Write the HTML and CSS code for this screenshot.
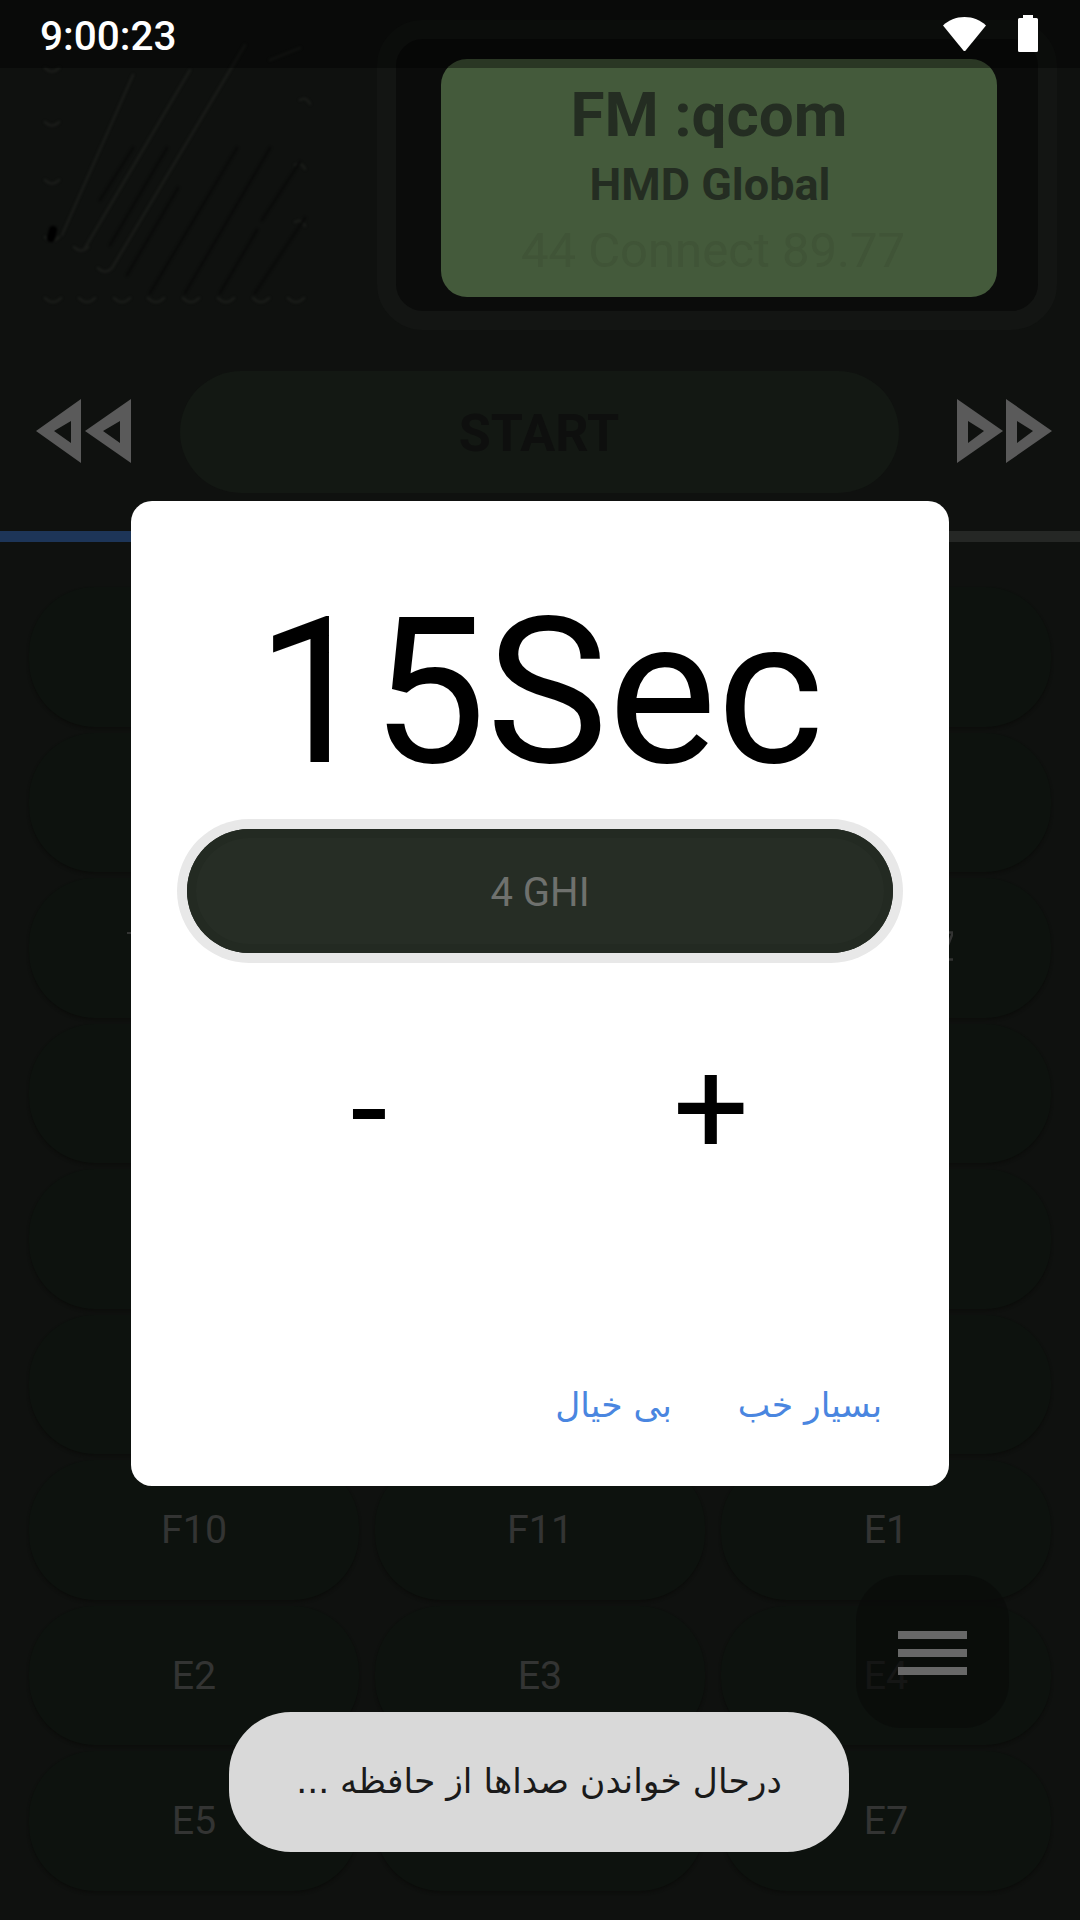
FILE: index.html
```html
<!DOCTYPE html>
<html lang="en">
<head>
<meta charset="utf-8">
<title>Sound pad</title>
<link rel="stylesheet" href="styles.css">
</head>
<body>
<div class="screen">
  <div class="status">
    <span class="clock">9:00:23</span>
    <div class="status-icons">
      <svg class="wifi" viewBox="0 0 43 34"><path d="M0 8.500C5.500 3.200 13 0 21.500 0S37.500 3.200 43 8.500L22.200 34h-1.400z" fill="#fff"/></svg>
      <svg class="battery" viewBox="0 0 20 37"><path d="M5 0h10v3h3.500A1.500 1.500 0 0 1 20 4.500V35.500A1.500 1.500 0 0 1 18.500 37H1.500A1.500 1.500 0 0 1 0 35.500V4.500A1.500 1.500 0 0 1 1.500 3H5z" fill="#fff"/></svg>
    </div>
  </div>

  <div class="top">
    <svg class="grille" viewBox="40 35 275 280">
      <g fill="none" stroke="#1a1c19" stroke-width="2.500" stroke-linecap="round">
        <path d="M45 298q8 8 16 0M79 298q8 8 16 0M114 298q8 8 16 0M148 298q8 8 16 0M183 298q8 8 16 0M218 298q8 8 16 0M253 298q8 8 16 0M288 298q8 8 16 0"/>
        <path d="M45 237q7 7 14 0M74 247q7 7 14 0M98 268q7 7 14 0M45 180q7 7 14 0M45 122q7 7 14 0M45 68q7 7 14 0"/>
        <path d="M62 235L133 75M85 248L190 70M112 268L245 45M270 60L300 48M300 100q6 -4 10 4M295 165q6 -4 10 4M295 222q6 -4 10 4"/>
      </g>
      <g fill="none" stroke="#0a0b0a" stroke-width="2.500" stroke-linecap="round">
        <path d="M100 200L133 148M110 245L167 148M127 275L178 188M150 293L237 148M185 293L270 148M220 293L257 230M255 293L305 218M262 220L300 162"/>
        <path d="M51 238L53 230" stroke="#000" stroke-width="8"/>
      </g>
    </svg>
    <div class="frame">
      <div class="lcd">
        <div class="lcd-title">FM :qcom</div>
        <div class="lcd-sub">HMD Global</div>
        <div class="lcd-faint">44 Connect 89.77</div>
      </div>
    </div>
  </div>

  <div class="controls">
    <svg class="arrows" viewBox="0 0 96 64"><path fill-rule="evenodd" d="M0 32L45 0V64zM18 32L35 44V22zM49 32L95 0V64zM67 32L84 44V22z" fill="#5a5a5a"/></svg>
    <div class="start">START</div>
    <svg class="arrows" viewBox="0 0 96 64"><path fill-rule="evenodd" d="M1 0L47 32L1 64zM12 22V44L28 32zM50 0L96 32L50 64zM61 22V44L77 32z" fill="#5a5a5a"/></svg>
  </div>

  <div class="progress"><div class="progress-fill"></div></div>

  <div class="pads">
    <div class="pad"></div><div class="pad"></div><div class="pad"></div>
    <div class="pad"></div><div class="pad"></div><div class="pad"></div>
    <div class="pad"></div><div class="pad"></div><div class="pad"></div>
    <div class="pad"></div><div class="pad"></div><div class="pad"></div>
    <div class="pad"></div><div class="pad"></div><div class="pad"></div>
    <div class="pad"></div><div class="pad"></div><div class="pad"></div>
    <div class="pad">F10</div><div class="pad">F11</div><div class="pad">E1</div>
    <div class="pad">E2</div><div class="pad">E3</div><div class="pad">E4</div>
    <div class="pad">E5</div><div class="pad">E6</div><div class="pad">E7</div>
  </div>

  <span class="peek-left"></span>
  <svg class="peek-right" viewBox="0 0 5 30"><path d="M0 1.500H5L0 14M0 28.500H5" fill="none" stroke="#333433" stroke-width="2.500"/></svg>

  <div class="fab">
    <span class="fab-bar"></span><span class="fab-bar"></span><span class="fab-bar"></span>
  </div>

  <div class="dialog">
    <div class="dialog-time">15Sec</div>
    <div class="dialog-pill"><div class="dialog-pill-inner">4 GHI</div></div>
    <div class="stepper">
      <span class="step step-minus">-</span>
      <span class="step step-plus">+</span>
    </div>
    <div class="actions" dir="rtl">
      <span class="action">بسیار خب</span>
      <span class="action">بی خیال</span>
    </div>
  </div>

  <div class="toast" dir="rtl">درحال خواندن صداها از حافظه ...</div>
</div>
</body>
</html>
```
FILE: styles.css
```css
* { box-sizing: border-box; }
html, body { margin: 0; padding: 0; background: #0f110f; }
body { font-family: Roboto, "Noto Sans", sans-serif; }

.screen {
  position: relative;
  width: 1080px;
  height: 1920px;
  overflow: hidden;
  display: flex;
  flex-direction: column;
  background: #0f110f;
}

/* status bar */
.status {
  position: absolute;
  top: 0;
  left: 0;
  right: 0;
  height: 68px;
  display: flex;
  align-items: center;
  justify-content: space-between;
  padding: 0 42px 0 40px;
  background: rgba(0, 0, 0, 0.38);
  z-index: 3;
}
.clock { color: #fff; font-size: 40.500px; font-weight: 500; line-height: 1; margin-top: 4px; }
.status-icons { display: flex; align-items: center; gap: 32px; margin-top: -1px; }
.wifi { width: 43px; height: 34px; display: block; }
.battery { width: 20px; height: 37px; display: block; }

/* top area */
.top { display: flex; align-items: flex-start; padding: 20px 0 0 40px; height: 330px; flex: none; }
.grille { width: 275px; height: 280px; margin-top: 15px; flex: none; filter: blur(0.8px); }
.frame {
  margin-left: 62px;
  width: 680px;
  height: 310px;
  padding: 20px 41px 17px 45px;
  background: #0b0c0b;
  border: 19px solid #131513;
  border-radius: 46px;
  flex: none;
}
.lcd {
  height: 238px;
  padding: 20px 20px 0 0;
  background: #445a3b;
  border-radius: 26px;
  display: flex;
  flex-direction: column;
  align-items: center;
  white-space: nowrap;
}
.lcd-title { font-size: 62px; font-weight: 700; line-height: 72px; color: #242d22; }
.lcd-sub { font-size: 45px; font-weight: 700; line-height: 60px; color: #242d22; margin-top: 4px; margin-left: 2px; }
.lcd-faint { font-size: 49px; line-height: 60px; color: #405437; margin-top: 6px; margin-left: 8px; }

/* transport */
.controls {
  flex: none;
  margin-top: 41px;
  height: 122px;
  padding: 0 28px 0 36px;
  display: flex;
  align-items: center;
  justify-content: space-between;
}
.arrows { width: 96px; height: 64px; display: block; flex: none; margin-top: -2px; }
.start {
  width: 719px;
  height: 122px;
  margin-right: 10px;
  padding-top: 3px;
  border-radius: 61px;
  background: #131813;
  color: #0e0f0e;
  font-size: 52px;
  font-weight: 700;
  display: flex;
  align-items: center;
  justify-content: center;
}

.progress { flex: none; margin-top: 38px; height: 11px; background: #252725; }
.progress-fill { width: 300px; height: 100%; background: #1d3558; }

/* pads */
.pads {
  flex: none;
  margin-top: 42px;
  padding-left: 21px;
  display: grid;
  grid-template-columns: repeat(3, 346px);
  grid-auto-rows: 145.500px;
}
.pad {
  margin: 3px 8px;
  border-radius: 66px;
  background: #0d120e;
  box-shadow: 0 2px 3px #0c0d0b;
  color: #333433;
  font-size: 39.400px;
  line-height: 1;
  display: flex;
  align-items: center;
  justify-content: center;
}

.peek-left { position: absolute; left: 127px; top: 932px; width: 6px; height: 2px; background: #333433; }
.peek-right { position: absolute; left: 948px; top: 931px; width: 5px; height: 30px; }

/* floating menu button */
.fab {
  position: absolute;
  left: 856px;
  top: 1575px;
  width: 153px;
  height: 153px;
  border-radius: 46px;
  background: rgba(10, 11, 10, 0.72);
  padding-top: 56px;
  display: flex;
  flex-direction: column;
  align-items: center;
  gap: 10px;
}
.fab-bar { width: 69px; height: 8px; background: #686868; flex: none; }

/* dialog */
.dialog {
  position: absolute;
  left: 131px;
  top: 501px;
  width: 818px;
  height: 985px;
  border-radius: 21px;
  background: #fff;
  display: flex;
  flex-direction: column;
  z-index: 2;
}
.dialog-time {
  margin-top: 71px;
  height: 240px;
  font-size: 205px;
  line-height: 240px;
  text-align: center;
  color: #000;
}
.dialog-pill {
  margin: 7px 46px 0;
  height: 144px;
  padding: 10px;
  border-radius: 72px;
  background: #e8e8e8;
}
.dialog-pill-inner {
  height: 124px;
  padding-top: 3px;
  border-radius: 62px;
  background: #262d25;
  box-shadow: inset 0 0 0 9px #232a22;
  color: #6f716e;
  font-size: 40px;
  display: flex;
  align-items: center;
  justify-content: center;
}
.stepper {
  margin-top: 72px;
  align-self: center;
  display: grid;
  grid-template-columns: repeat(2, 342px);
}
.step { font-size: 134px; line-height: 150px; text-align: center; color: #000; margin-top: -1px; }
.actions {
  margin-top: auto;
  margin-bottom: 56px;
  padding-right: 67px;
  display: flex;
  gap: 66px;
  justify-content: flex-start;
}
.action { font-family: "DejaVu Sans", sans-serif; font-size: 34.500px; line-height: 50px; color: #4a86e0; }

/* toast */
.toast {
  position: absolute;
  left: 229px;
  top: 1712px;
  width: 620px;
  height: 140px;
  padding-bottom: 2px;
  border-radius: 62px;
  background: #d9d9d9;
  color: #1a1a1a;
  font-family: "DejaVu Sans", sans-serif;
  font-size: 34.500px;
  display: flex;
  align-items: center;
  justify-content: center;
  z-index: 2;
}
```
